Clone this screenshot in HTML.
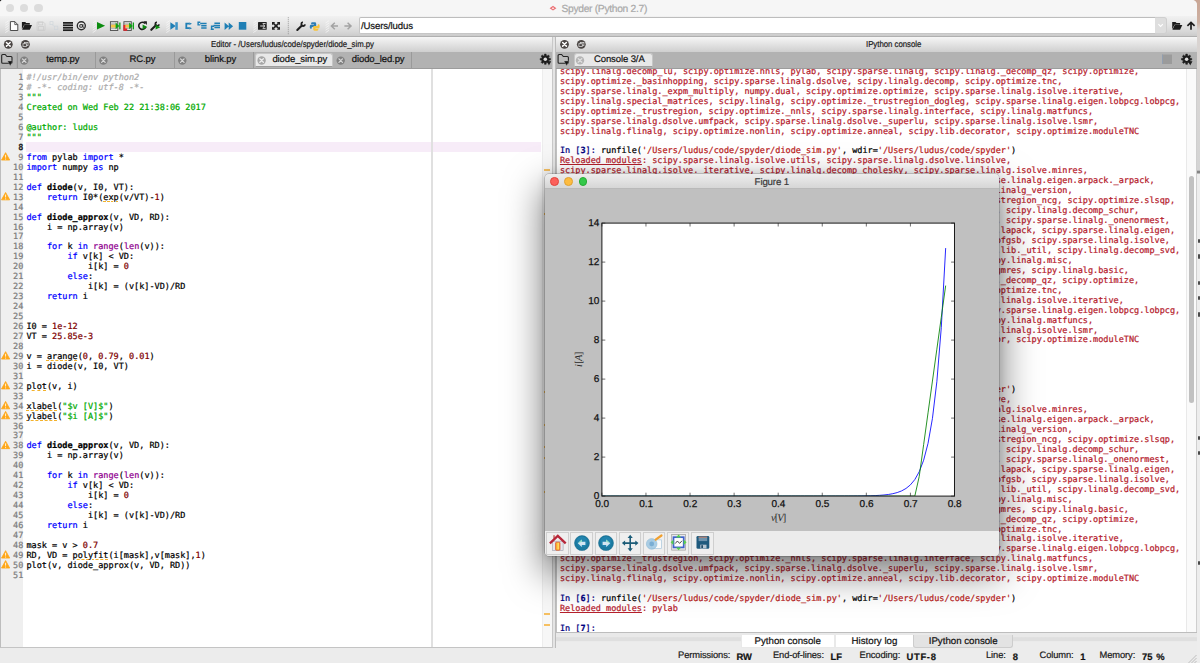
<!DOCTYPE html>
<html lang="en"><head><meta charset="utf-8"><title>Spyder (Python 2.7)</title>
<style>
*{box-sizing:border-box}
html,body{margin:0;padding:0}
body{width:1200px;height:663px;overflow:hidden;position:relative;background:#d9d9d9;font-family:"Liberation Sans",sans-serif;color:#111;-webkit-text-stroke:0.2px;text-rendering:geometricPrecision}
.abs{position:absolute}
#win{position:absolute;left:0;top:0;width:1196.6px;height:663px;background:#ececec;overflow:hidden;border-radius:3px 5px 0 0}
#tlc{position:absolute;left:0;top:0;width:4px;height:4px;background:#000}
.rm{position:absolute;left:1198px;width:2px;height:4.6px;background:#4a4a4a;border-radius:1px}
#tbar{position:absolute;left:0;top:0;width:1197px;height:16px;background:#f6f6f6}
#ttl{position:absolute;left:561.5px;top:2.5px;font-size:10.3px;line-height:13px;color:#a9a9a9;letter-spacing:-0.32px;white-space:nowrap}
.tl{position:absolute;top:3.5px;width:8.6px;height:8.6px;border-radius:50%;background:#dcdcdc}
#tool{position:absolute;left:0;top:15.5px;width:1197px;height:21px;background:linear-gradient(#f1f1f1,#e4e4e4 45%,#d6d6d6 80%,#cbcbcb);border-bottom:1px solid #b0b0b0}
#path{position:absolute;left:358.5px;top:17.2px;width:796.5px;height:16.4px;background:#fff;border:1px solid #c6c6c6;border-top-color:#bdbdbd;border-right:0;border-radius:2px 0 0 2px}
#pathtxt{position:absolute;left:361px;top:21.4px;font-size:9.6px;line-height:12px;letter-spacing:-0.12px;color:#111;white-space:nowrap}
#pathdd{position:absolute;left:1154.6px;top:17.2px;width:12.6px;height:16.4px;background:#dedede;border:1px solid #cfcfcf;border-left:0;border-radius:0 3px 3px 0}
.ptitle span{transform:scaleX(.9);transform-origin:0 50%}
.ptitle{position:absolute;top:36.5px;height:15.5px;background:linear-gradient(#f6f6f6,#e6e6e6 40%,#cfcfcf);font-size:8.7px;line-height:14.8px;text-align:center;color:#1a1a1a;letter-spacing:-0.02px;white-space:nowrap}
.tabbar{position:absolute;top:52px;height:16.8px;background:#b2b2b2;border-bottom:1.3px solid #9c9c9c}
.tab{position:absolute;top:52px;height:16px;font-size:9.5px;line-height:16.4px;color:#111;white-space:nowrap;letter-spacing:-0.1px}
.tab.sep{border-right:1px solid #9a9a9a}
.tab.act{background:#e8e8e8;border-radius:3px 3px 1px 1px;top:52.8px;height:13.9px;line-height:12px;border:1px solid #c6c6c6;border-bottom-color:#9d9d9d}
.tab span{position:absolute;top:0}
#ed{position:absolute;left:0;top:68.8px;width:551.5px;height:579.4px;background:#fff;overflow:hidden;border-left:1px solid #bdbdbd;border-bottom:1px solid #c4c4c4}
#gut{position:absolute;left:0;top:0;width:22.3px;height:580px;background:#efefef}
#curline{position:absolute;left:25.2px;top:73.0px;width:514.8px;height:9.95px;background:#f7ecf8}
#edge{position:absolute;left:430.3px;top:0;width:1.4px;height:580px;background:#e0e0e0}
#flags{position:absolute;left:541px;top:0;width:10px;height:580px;background:#f7f7f7;border-left:1px solid #ededed}
.flag{position:absolute;left:542.8px;width:6px;height:2px;background:#f6c062;margin-top:0.6px}
.mono,.ln,.cl,.co{font-family:"DejaVu Sans Mono","Liberation Mono",monospace;font-size:8.53px;line-height:9.95px;white-space:pre;-webkit-text-stroke:0.22px}
.ln{position:absolute;left:0;width:22.3px;text-align:right;color:#7d7d7d;margin-top:-68.8px}
.ln.cur{color:#222;font-weight:bold}
.cl{position:absolute;left:25.4px;color:#000;margin-top:-68.8px}
.k{color:#0000ff}.b{color:#900090}.d{font-weight:bold}.n{color:#800000}.s{color:#00aa00}.c{color:#adadad;font-style:italic}
.w{text-decoration:underline;text-decoration-style:dashed;text-decoration-color:#f3b22c;text-decoration-thickness:1px;text-underline-offset:1px}
#split{position:absolute;left:551.5px;top:36.5px;width:4.5px;height:611px;background:#e4e4e4;border-left:1px solid #c8c8c8;border-right:1px solid #bcbcbc}
#co{position:absolute;left:556px;top:68.8px;width:641px;height:564.2px;background:#fff;overflow:hidden;border-left:1px solid #c2c2c2;border-bottom:1px solid #bdbdbd}
.co{position:absolute;left:2.9px;color:#b5202c}
.co.blk{color:#000}
.pi{color:#000080}.pi b{font-weight:bold}.ps{color:#ba2121}
#sbtrack{position:absolute;left:629.3px;top:0;width:10.4px;border-right:1px solid #cfcfcf;height:565px;background:#fafafa;border-left:1px solid #e9e9e9}
#sbthumb{position:absolute;left:631.7px;top:107.0px;width:5.8px;height:226.8px;border-radius:3px;background:#c1c1c1}
#btabs{position:absolute;left:556px;top:633px;width:641px;height:15px;background:linear-gradient(#e9e9e9 0,#e9e9e9 4px,#dfdfdf 4.6px,#dfdfdf 8px,#ececec 8.6px)}
.bt{position:absolute;top:634.6px;height:13.6px;font-size:9.7px;line-height:14px;text-align:center;white-space:nowrap;color:#111;background:#fff;border:1px solid #e9e9e9;border-top:0}
.bt.sel{background:#e3e3e3;border-color:#cdcdcd;border-radius:0 0 3px 3px}
#status{position:absolute;left:0;top:648px;width:1197px;height:15px;background:#ececec}
.sl{position:absolute;top:648.7px;font-size:9.35px;line-height:12px;color:#1a1a1a;white-space:nowrap;letter-spacing:-0.1px}
.sv{position:absolute;top:650.6px;font-weight:bold;font-size:9.4px;line-height:12px;color:#111;white-space:pre}
#fig{position:absolute;left:544.7px;top:174.2px;width:454.2px;height:381.6px;background:#c0c0c0;border-radius:4px;box-shadow:0 0 0 0.5px rgba(0,0,0,.28),0 15px 36px 3px rgba(0,0,0,.5),0 0 10px rgba(0,0,0,.12);overflow:hidden}
#figt{position:absolute;left:0;top:0;width:100%;height:15px;background:linear-gradient(#ededed,#d6d6d6);border-bottom:1px solid #b9b9b9;text-align:center;font-size:9.7px;line-height:17.6px;color:#3a3a3a;letter-spacing:-0.15px;overflow:hidden}
.ftl{position:absolute;top:3.2px;width:8.8px;height:8.8px;border-radius:50%}
#figtb{position:absolute;left:0;top:356.6px;width:100%;height:25px;background:#ececec}
.fb{position:absolute;top:358px;width:22.3px;height:22.6px;border:1px solid #cfcfcf;background:#efefef}
svg{position:absolute;left:0;top:0;overflow:visible}
svg text{font-family:"Liberation Sans",sans-serif;text-rendering:geometricPrecision}
#rstrip{position:absolute;left:1190px;top:0;width:10px;height:663px;background:linear-gradient(#c9a695 0,#cdb0a2 22px,#d9d3d0 30px,#d8d6d5 100px,#d4d4d4 170px,#6a6a6a 172px,#ededed 174.5px,#ededed 100%)}
</style></head>
<body>
<div id="tlc"></div><div id="rstrip"></div>
<div class="rm" style="top:238.8px"></div><div class="rm" style="top:254.4px"></div><div class="rm" style="top:280.8px"></div><div class="rm" style="top:295.9px"></div><div class="rm" style="top:312.2px"></div><div class="rm" style="top:435.9px"></div><div class="rm" style="top:450.9px"></div><div class="rm" style="top:560.9px"></div>
<div id="win">
<div id="tbar">
<div class="tl" style="left:5.5px"></div><div class="tl" style="left:19.8px"></div><div class="tl" style="left:34.2px"></div>
<div id="ttl">Spyder (Python 2.7)</div>
</div>
<div id="tool"></div>
<div id="path"></div><div id="pathtxt">/Users/ludus</div><div id="pathdd"></div>
<div class="ptitle" style="left:0;width:551.5px"><span style="position:absolute;left:210.8px">Editor - /Users/ludus/code/spyder/diode_sim.py</span></div>
<div class="ptitle" style="left:556px;width:641px"><span style="position:absolute;left:309.6px">IPython console</span></div>
<div class="tabbar" style="left:0;width:551.5px"></div>
<div class="tabbar" style="left:556px;width:641px"></div>
<div class="tab sep" style="left:17.5px;width:78.5px"><span style="left:28.8px">temp.py</span></div>
<div class="tab sep" style="left:96.0px;width:79.0px"><span style="left:33.5px">RC.py</span></div>
<div class="tab sep" style="left:175.0px;width:79.0px"><span style="left:29.8px">blink.py</span></div>
<div class="tab act" style="left:254.6px;width:78.7px"><span style="left:16.8px">diode_sim.py</span></div>
<div class="tab sep" style="left:333.3px;width:79.2px"><span style="left:18.5px">diodo_led.py</span></div>
<div class="tab act" style="left:573.7px;width:79.6px"><span style="left:19.3px">Console 3/A</span></div>
<div id="ed">
<div id="gut"></div><div id="curline"></div><div id="edge"></div><div id="flags"></div>
<div class="flag" style="top:99.4px"></div>
<div class="flag" style="top:143.8px"></div>
<div class="flag" style="top:321.4px"></div>
<div class="flag" style="top:354.7px"></div>
<div class="flag" style="top:376.9px"></div>
<div class="flag" style="top:388.0px"></div>
<div class="flag" style="top:421.3px"></div>
<div class="flag" style="top:543.4px"></div>
<div class="flag" style="top:554.5px"></div>
<div class="ln" style="top:74.25px">1</div>
<div class="cl" style="top:74.25px"><span class="c">#!/usr/bin/env python2</span></div>
<div class="ln" style="top:84.20px">2</div>
<div class="cl" style="top:84.20px"><span class="c"># -*- coding: utf-8 -*-</span></div>
<div class="ln" style="top:94.15px">3</div>
<div class="cl" style="top:94.15px"><span class="s">"""</span></div>
<div class="ln" style="top:104.10px">4</div>
<div class="cl" style="top:104.10px"><span class="s">Created on Wed Feb 22 21:38:06 2017</span></div>
<div class="ln" style="top:114.05px">5</div>
<div class="ln" style="top:124.00px">6</div>
<div class="cl" style="top:124.00px"><span class="s">@author: ludus</span></div>
<div class="ln" style="top:133.95px">7</div>
<div class="cl" style="top:133.95px"><span class="s">"""</span></div>
<div class="ln cur" style="top:143.90px">8</div>
<div class="ln" style="top:153.85px">9</div>
<div class="cl" style="top:153.85px"><span class="k">from</span> pylab <span class="k">import</span> *</div>
<div class="ln" style="top:163.80px">10</div>
<div class="cl" style="top:163.80px"><span class="k">import</span> numpy <span class="k">as</span> np</div>
<div class="ln" style="top:173.75px">11</div>
<div class="ln" style="top:183.70px">12</div>
<div class="cl" style="top:183.70px"><span class="k">def</span> <span class="d">diode</span>(v, I0, VT):</div>
<div class="ln" style="top:193.65px">13</div>
<div class="cl" style="top:193.65px">    <span class="k">return</span> I0*(<span class="w">exp</span>(v/VT)-<span class="n">1</span>)</div>
<div class="ln" style="top:203.60px">14</div>
<div class="ln" style="top:213.55px">15</div>
<div class="cl" style="top:213.55px"><span class="k">def</span> <span class="d">diode_approx</span>(v, VD, RD):</div>
<div class="ln" style="top:223.50px">16</div>
<div class="cl" style="top:223.50px">    i = np.array(v)</div>
<div class="ln" style="top:233.45px">17</div>
<div class="ln" style="top:243.40px">18</div>
<div class="cl" style="top:243.40px">    <span class="k">for</span> k <span class="k">in</span> <span class="b">range</span>(<span class="b">len</span>(v)):</div>
<div class="ln" style="top:253.35px">19</div>
<div class="cl" style="top:253.35px">        <span class="k">if</span> v[k] &lt; VD:</div>
<div class="ln" style="top:263.30px">20</div>
<div class="cl" style="top:263.30px">            i[k] = <span class="n">0</span></div>
<div class="ln" style="top:273.25px">21</div>
<div class="cl" style="top:273.25px">        <span class="k">else</span>:</div>
<div class="ln" style="top:283.20px">22</div>
<div class="cl" style="top:283.20px">            i[k] = (v[k]-VD)/RD</div>
<div class="ln" style="top:293.15px">23</div>
<div class="cl" style="top:293.15px">    <span class="k">return</span> i</div>
<div class="ln" style="top:303.10px">24</div>
<div class="ln" style="top:313.05px">25</div>
<div class="ln" style="top:323.00px">26</div>
<div class="cl" style="top:323.00px">I0 = <span class="n">1e-12</span></div>
<div class="ln" style="top:332.95px">27</div>
<div class="cl" style="top:332.95px">VT = <span class="n">25.85e-3</span></div>
<div class="ln" style="top:342.90px">28</div>
<div class="ln" style="top:352.85px">29</div>
<div class="cl" style="top:352.85px">v = <span class="w">arange</span>(<span class="n">0</span>, <span class="n">0.79</span>, <span class="n">0.01</span>)</div>
<div class="ln" style="top:362.80px">30</div>
<div class="cl" style="top:362.80px">i = diode(v, I0, VT)</div>
<div class="ln" style="top:372.75px">31</div>
<div class="ln" style="top:382.70px">32</div>
<div class="cl" style="top:382.70px"><span class="w">plot</span>(v, i)</div>
<div class="ln" style="top:392.65px">33</div>
<div class="ln" style="top:402.60px">34</div>
<div class="cl" style="top:402.60px"><span class="w">xlabel</span>(<span class="s">"$v [V]$"</span>)</div>
<div class="ln" style="top:412.55px">35</div>
<div class="cl" style="top:412.55px"><span class="w">ylabel</span>(<span class="s">"$i [A]$"</span>)</div>
<div class="ln" style="top:422.50px">36</div>
<div class="ln" style="top:432.45px">37</div>
<div class="ln" style="top:442.40px">38</div>
<div class="cl" style="top:442.40px"><span class="k">def</span> <span class="d">diode_approx</span>(v, VD, RD):</div>
<div class="ln" style="top:452.35px">39</div>
<div class="cl" style="top:452.35px">    i = np.array(v)</div>
<div class="ln" style="top:462.30px">40</div>
<div class="ln" style="top:472.25px">41</div>
<div class="cl" style="top:472.25px">    <span class="k">for</span> k <span class="k">in</span> <span class="b">range</span>(<span class="b">len</span>(v)):</div>
<div class="ln" style="top:482.20px">42</div>
<div class="cl" style="top:482.20px">        <span class="k">if</span> v[k] &lt; VD:</div>
<div class="ln" style="top:492.15px">43</div>
<div class="cl" style="top:492.15px">            i[k] = <span class="n">0</span></div>
<div class="ln" style="top:502.10px">44</div>
<div class="cl" style="top:502.10px">        <span class="k">else</span>:</div>
<div class="ln" style="top:512.05px">45</div>
<div class="cl" style="top:512.05px">            i[k] = (v[k]-VD)/RD</div>
<div class="ln" style="top:522.00px">46</div>
<div class="cl" style="top:522.00px">    <span class="k">return</span> i</div>
<div class="ln" style="top:531.95px">47</div>
<div class="ln" style="top:541.90px">48</div>
<div class="cl" style="top:541.90px">mask = v &gt; <span class="n">0.7</span></div>
<div class="ln" style="top:551.85px">49</div>
<div class="cl" style="top:551.85px">RD, VD = <span class="w">polyfit</span>(i[mask],v[mask],<span class="n">1</span>)</div>
<div class="ln" style="top:561.80px">50</div>
<div class="cl" style="top:561.80px">plot(v, diode_approx(v, VD, RD))</div>
<div class="ln" style="top:571.75px">51</div>
</div>
<div id="split"></div>
<div id="co">
<div class="co" style="top:-0.95px">scipy.linalg.decomp_lu, scipy.optimize.nnls, pylab, scipy.sparse.linalg, scipy.linalg._decomp_qz, scipy.optimize,</div>
<div class="co" style="top:9.00px">scipy.optimize._basinhopping, scipy.sparse.linalg.dsolve, scipy.linalg.decomp, scipy.optimize.tnc,</div>
<div class="co" style="top:18.95px">scipy.sparse.linalg._expm_multiply, numpy.dual, scipy.optimize.optimize, scipy.sparse.linalg.isolve.iterative,</div>
<div class="co" style="top:28.90px">scipy.linalg.special_matrices, scipy.linalg, scipy.optimize._trustregion_dogleg, scipy.sparse.linalg.eigen.lobpcg.lobpcg,</div>
<div class="co" style="top:38.85px">scipy.optimize._trustregion, scipy.optimize._nnls, scipy.sparse.linalg.interface, scipy.linalg.matfuncs,</div>
<div class="co" style="top:48.80px">scipy.sparse.linalg.dsolve.umfpack, scipy.sparse.linalg.dsolve._superlu, scipy.sparse.linalg.isolve.lsmr,</div>
<div class="co" style="top:58.75px">scipy.linalg.flinalg, scipy.optimize.nonlin, scipy.optimize.anneal, scipy.lib.decorator, scipy.optimize.moduleTNC</div>
<div class="co blk" style="top:78.65px"><span class="pi">In [<b>3</b>]: </span>runfile(<span class="ps">'/Users/ludus/code/spyder/diode_sim.py'</span>, wdir=<span class="ps">'/Users/ludus/code/spyder'</span>)</div>
<div class="co" style="top:88.60px"><u>Reloaded modules</u>: scipy.sparse.linalg.isolve.utils, scipy.sparse.linalg.dsolve.linsolve,</div>
<div class="co" style="top:98.55px">scipy.sparse.linalg.isolve._iterative, scipy.linalg.decomp_cholesky, scipy.sparse.linalg.isolve.minres,</div>
<div class="co" style="top:108.50px">scipy.sparse.linalg.eigen.arpack, scipy.sparse.linalg.eigen.arpack.arpack, scipy.sparse.linalg.eigen.arpack._arpack,</div>
<div class="co" style="top:118.45px">scipy.sparse.linalg.isolve.lsqr, scipy.optimize._differentialevolution, scipy.linalg.linalg_version,</div>
<div class="co" style="top:128.40px">scipy.optimize._minpack, scipy.sparse.linalg.dsolve._add_newdocs, scipy.optimize._trustregion_ncg, scipy.optimize.slsqp,</div>
<div class="co" style="top:138.35px">scipy.optimize._zeros, scipy.sparse.linalg.matfuncs, scipy.sparse.linalg.eigen.lobpcg, scipy.linalg.decomp_schur,</div>
<div class="co" style="top:148.30px">scipy.linalg.blas, scipy.linalg._fblas, scipy.optimize.zeros, scipy.optimize.minpack2, scipy.sparse.linalg._onenormest,</div>
<div class="co" style="top:158.25px">scipy.optimize.cobyla, scipy.optimize._cobyla, scipy.optimize._minimize, scipy.linalg.lapack, scipy.sparse.linalg.eigen,</div>
<div class="co" style="top:168.20px">scipy.optimize.minpack, scipy.optimize._root, scipy.optimize._slsqp, scipy.optimize.lbfgsb, scipy.sparse.linalg.isolve,</div>
<div class="co" style="top:178.15px">scipy.optimize.linesearch, scipy.linalg._solvers, scipy.linalg._matfuncs_sqrtm, scipy.lib._util, scipy.linalg.decomp_svd,</div>
<div class="co" style="top:188.10px">scipy.linalg._decomp_polar, scipy.linalg._expm_frechet, scipy.optimize._tstutils, scipy.linalg.misc,</div>
<div class="co" style="top:198.05px">scipy.optimize._zeros, scipy.sparse.linalg.eigen.arpack, scipy.sparse.linalg.isolve.lgmres, scipy.linalg.basic,</div>
<div class="co" style="top:208.00px">scipy.linalg.decomp_lu, scipy.optimize.nnls, pylab, scipy.sparse.linalg, scipy.linalg._decomp_qz, scipy.optimize,</div>
<div class="co" style="top:217.95px">scipy.optimize._basinhopping, scipy.sparse.linalg.dsolve, scipy.linalg.decomp, scipy.optimize.tnc,</div>
<div class="co" style="top:227.90px">scipy.sparse.linalg._expm_multiply, numpy.dual, scipy.optimize.optimize, scipy.sparse.linalg.isolve.iterative,</div>
<div class="co" style="top:237.85px">scipy.linalg.special_matrices, scipy.linalg, scipy.optimize._trustregion_dogleg, scipy.sparse.linalg.eigen.lobpcg.lobpcg,</div>
<div class="co" style="top:247.80px">scipy.optimize._trustregion, scipy.optimize._nnls, scipy.sparse.linalg.interface, scipy.linalg.matfuncs,</div>
<div class="co" style="top:257.75px">scipy.sparse.linalg.dsolve.umfpack, scipy.sparse.linalg.dsolve._superlu, scipy.sparse.linalg.isolve.lsmr,</div>
<div class="co" style="top:267.70px">scipy.linalg.flinalg, scipy.optimize.nonlin, scipy.optimize.anneal, scipy.lib.decorator, scipy.optimize.moduleTNC</div>
<div class="co blk" style="top:287.60px"><span class="pi">In [<b>4</b>]: </span>close(<span class="ps">'all'</span>)</div>
<div class="co blk" style="top:317.45px"><span class="pi">In [<b>5</b>]: </span>runfile(<span class="ps">'/Users/ludus/code/spyder/diode_sim.py'</span>, wdir=<span class="ps">'/Users/ludus/code/spyder'</span>)</div>
<div class="co" style="top:327.40px"><u>Reloaded modules</u>: scipy.sparse.linalg.isolve.utils, scipy.sparse.linalg.dsolve.linsolve,</div>
<div class="co" style="top:337.35px">scipy.sparse.linalg.isolve._iterative, scipy.linalg.decomp_cholesky, scipy.sparse.linalg.isolve.minres,</div>
<div class="co" style="top:347.30px">scipy.sparse.linalg.eigen.arpack, scipy.sparse.linalg.eigen.arpack.arpack, scipy.sparse.linalg.eigen.arpack._arpack,</div>
<div class="co" style="top:357.25px">scipy.sparse.linalg.isolve.lsqr, scipy.optimize._differentialevolution, scipy.linalg.linalg_version,</div>
<div class="co" style="top:367.20px">scipy.optimize._minpack, scipy.sparse.linalg.dsolve._add_newdocs, scipy.optimize._trustregion_ncg, scipy.optimize.slsqp,</div>
<div class="co" style="top:377.15px">scipy.optimize._zeros, scipy.sparse.linalg.matfuncs, scipy.sparse.linalg.eigen.lobpcg, scipy.linalg.decomp_schur,</div>
<div class="co" style="top:387.10px">scipy.linalg.blas, scipy.linalg._fblas, scipy.optimize.zeros, scipy.optimize.minpack2, scipy.sparse.linalg._onenormest,</div>
<div class="co" style="top:397.05px">scipy.optimize.cobyla, scipy.optimize._cobyla, scipy.optimize._minimize, scipy.linalg.lapack, scipy.sparse.linalg.eigen,</div>
<div class="co" style="top:407.00px">scipy.optimize.minpack, scipy.optimize._root, scipy.optimize._slsqp, scipy.optimize.lbfgsb, scipy.sparse.linalg.isolve,</div>
<div class="co" style="top:416.95px">scipy.optimize.linesearch, scipy.linalg._solvers, scipy.linalg._matfuncs_sqrtm, scipy.lib._util, scipy.linalg.decomp_svd,</div>
<div class="co" style="top:426.90px">scipy.linalg._decomp_polar, scipy.linalg._expm_frechet, scipy.optimize._tstutils, scipy.linalg.misc,</div>
<div class="co" style="top:436.85px">scipy.optimize._zeros, scipy.sparse.linalg.eigen.arpack, scipy.sparse.linalg.isolve.lgmres, scipy.linalg.basic,</div>
<div class="co" style="top:446.80px">scipy.linalg.decomp_lu, scipy.optimize.nnls, pylab, scipy.sparse.linalg, scipy.linalg._decomp_qz, scipy.optimize,</div>
<div class="co" style="top:456.75px">scipy.optimize._basinhopping, scipy.sparse.linalg.dsolve, scipy.linalg.decomp, scipy.optimize.tnc,</div>
<div class="co" style="top:466.70px">scipy.sparse.linalg._expm_multiply, numpy.dual, scipy.optimize.optimize, scipy.sparse.linalg.isolve.iterative,</div>
<div class="co" style="top:476.65px">scipy.linalg.special_matrices, scipy.linalg, scipy.optimize._trustregion_dogleg, scipy.sparse.linalg.eigen.lobpcg.lobpcg,</div>
<div class="co" style="top:486.60px">scipy.optimize._trustregion, scipy.optimize._nnls, scipy.sparse.linalg.interface, scipy.linalg.matfuncs,</div>
<div class="co" style="top:496.55px">scipy.sparse.linalg.dsolve.umfpack, scipy.sparse.linalg.dsolve._superlu, scipy.sparse.linalg.isolve.lsmr,</div>
<div class="co" style="top:506.50px">scipy.linalg.flinalg, scipy.optimize.nonlin, scipy.optimize.anneal, scipy.lib.decorator, scipy.optimize.moduleTNC</div>
<div class="co blk" style="top:526.40px"><span class="pi">In [<b>6</b>]: </span>runfile(<span class="ps">'/Users/ludus/code/spyder/diode_sim.py'</span>, wdir=<span class="ps">'/Users/ludus/code/spyder'</span>)</div>
<div class="co" style="top:536.35px"><u>Reloaded modules</u>: pylab</div>
<div class="co blk" style="top:556.25px"><span class="pi">In [<b>7</b>]: </span></div>
<div id="sbtrack"></div><div id="sbthumb"></div>
</div>
<div id="btabs"></div>
<div class="bt" style="left:740.8px;width:93.8px">Python console</div>
<div class="bt" style="left:835.3px;width:78.3px">History log</div>
<div class="bt sel" style="left:913.3px;width:99.8px">IPython console</div>
<div id="status"></div>
<div class="sl" style="left:678.0px">Permissions:</div>
<div class="sv" style="left:736.5px">RW</div>
<div class="sl" style="left:773.0px;letter-spacing:-0.12px">End-of-lines:</div>
<div class="sv" style="left:830.5px">LF</div>
<div class="sl" style="left:859.5px">Encoding:</div>
<div class="sv" style="left:906.5px;letter-spacing:0.7px">UTF-8</div>
<div class="sl" style="left:986.0px">Line:</div>
<div class="sv" style="left:1012.8px">8</div>
<div class="sl" style="left:1039.5px">Column:</div>
<div class="sv" style="left:1080.2px">1</div>
<div class="sl" style="left:1099.5px">Memory:</div>
<div class="sv" style="left:1142.0px;word-spacing:1.2px">75 %</div>
<svg width="1200" height="663" viewBox="0 0 1200 663"><path d="M5.3,23.0l3.4,-2.3M5.3,25.4l3.4,-2.3M5.3,27.8l3.4,-2.3M5.3,30.2l3.4,-2.3M5.3,32.6l3.4,-2.3" stroke="#fbfbfb" stroke-width="1" fill="none" opacity=".65"/>
<path d="M92.7,23.0l3.4,-2.3M92.7,25.4l3.4,-2.3M92.7,27.8l3.4,-2.3M92.7,30.2l3.4,-2.3M92.7,32.6l3.4,-2.3" stroke="#fbfbfb" stroke-width="1" fill="none" opacity=".65"/>
<path d="M166.3,23.0l3.4,-2.3M166.3,25.4l3.4,-2.3M166.3,27.8l3.4,-2.3M166.3,30.2l3.4,-2.3M166.3,32.6l3.4,-2.3" stroke="#fbfbfb" stroke-width="1" fill="none" opacity=".65"/>
<path d="M253.3,23.0l3.4,-2.3M253.3,25.4l3.4,-2.3M253.3,27.8l3.4,-2.3M253.3,30.2l3.4,-2.3M253.3,32.6l3.4,-2.3" stroke="#fbfbfb" stroke-width="1" fill="none" opacity=".65"/>
<path d="M325.6,23.0l3.4,-2.3M325.6,25.4l3.4,-2.3M325.6,27.8l3.4,-2.3M325.6,30.2l3.4,-2.3M325.6,32.6l3.4,-2.3" stroke="#fbfbfb" stroke-width="1" fill="none" opacity=".65"/>
<path d="M10.4,21.6h4.4l3,3v5.9h-7.4z" fill="#fdfdfd" stroke="#3a3a3a" stroke-width="0.9" stroke-linejoin="round"/><path d="M14.8,21.6v3h3" fill="none" stroke="#3a3a3a" stroke-width="0.8"/>
<path d="M21.90,22.00h3.3l1,1.1h3.6v1.6h-5.6l-2.3,4.6z" fill="#1c1c1c"/><path d="M24.40,25.10h7.6l-2.2,4.7h-7.7z" fill="#1c1c1c"/>
<g fill="none" stroke="#cdcdcd" stroke-width="0.8"><path d="M37.1,22.1h6.3l1.6,1.6v6.6h-7.9z"/><rect x="38.7" y="22.1" width="4" height="2.8"/><rect x="38.4" y="26.6" width="5.2" height="3.7"/></g>
<g fill="none" stroke="#cfd6dc" stroke-width="0.8" opacity=".8"><rect x="50" y="21.6" width="3" height="3"/><rect x="54.4" y="26.2" width="3.4" height="3.4"/><path d="M52,24.5l3,2.5"/></g>
<rect x="63" y="22.0" width="10" height="1.75" fill="#1e1e1e"/><rect x="63" y="24.4" width="10" height="1.75" fill="#1e1e1e"/><rect x="63" y="26.9" width="10" height="1.75" fill="#1e1e1e"/><rect x="63" y="29.3" width="10" height="1.75" fill="#1e1e1e"/>
<circle cx="81.3" cy="25.8" r="4" fill="#efefef" stroke="#2a2a2a" stroke-width="1.4"/><circle cx="81.1" cy="25.9" r="1.4" fill="none" stroke="#2a2a2a" stroke-width="1.1"/><path d="M82.9,24.2v2.4q0,1 1.1,0.7" fill="none" stroke="#2a2a2a" stroke-width="1"/>
<path d="M97,21.9l8.1,3.8l-8.1,3.8z" fill="#0c8c10"/>
<rect x="110.40" y="21.7" width="7.4" height="8.8" fill="#e6e6e6" stroke="#4a4a4a" stroke-width="0.9"/><path d="M110.40,24.1h7.4M110.40,28.1h7.4" stroke="#777" stroke-width="0.7"/><rect x="111.10" y="24.7" width="6" height="2.8" fill="#f6c544"/><path d="M115.60,22.5l3.7,3.4l-3.7,3.4z" fill="#10a015"/><rect x="119.20" y="22.5" width="1.3" height="6.8" fill="#10a015"/>
<rect x="123.90" y="21.7" width="7.4" height="8.8" fill="#e6e6e6" stroke="#4a4a4a" stroke-width="0.9"/><path d="M123.90,24.1h7.4M123.90,28.1h7.4" stroke="#777" stroke-width="0.7"/><rect x="124.60" y="24.7" width="6" height="2.8" fill="#f6c544"/><path d="M129.10,22.5l3.7,3.4l-3.7,3.4z" fill="#10a015"/><rect x="132.70" y="22.5" width="1.3" height="6.8" fill="#10a015"/>
<path d="M123.4,24.9h1.9v3.6h1.9v2.2h-3.8z" fill="#e8232a"/>
<path d="M145.2,23.6a3.6,3.6 0 1 0 0.6,3.2" fill="none" stroke="#1c1c1c" stroke-width="1.6"/><path d="M143.3,21.3h3.6v3.6z" fill="#1c1c1c"/>
<path d="M142.6,24.6l4.6,2.5l-4.6,2.5z" fill="#0c8c10"/>
<path d="M151.30,29.80L155.90,25.30" stroke="#1f1f1f" stroke-width="2.1" stroke-linecap="round"/><path d="M156.87,22.13A1.90,1.90 0 1 0 159.07,24.33" fill="none" stroke="#1f1f1f" stroke-width="1.8"/>
<path d="M155.6,24.8l4.7,2.4l-4.7,2.4z" fill="#0c8c10"/>
<path d="M170.4,22.2l5.3,3.8l-5.3,3.8z" fill="#1f7fb5"/><rect x="175.3" y="22.2" width="2.5" height="7.6" fill="#3d93c6"/>
<path d="M189.6,23.6h-3.3v4.6h3.3" fill="none" stroke="#1f7fb5" stroke-width="1.8"/><path d="M189.4,22.4l2.6,1.3l-2.6,1.3zM189.4,26.9l2.6,1.3l-2.6,1.3z" fill="#1f7fb5"/>
<path d="M200.3,22.3h-2.2v2.6h2.2" fill="none" stroke="#1f7fb5" stroke-width="1.4"/><path d="M200.2,23.6h6.4M201.2,25.8h5.4M201.2,28.0h5.4" stroke="#1f7fb5" stroke-width="1.5"/>
<path d="M214.2,26.3h-2.6v3h2.2" fill="none" stroke="#1f7fb5" stroke-width="1.5"/><path d="M211.6,28l-1,1.8h2z" fill="#1f7fb5"/><path d="M214.4,23.2h5.6M213.6,25.4h6.4M214.4,27.6h5.6" stroke="#1f7fb5" stroke-width="1.5"/>
<path d="M224.6,22.4l4.4,3.8l-4.4,3.8zM228.7,22.4l4.4,3.8l-4.4,3.8z" fill="#1f7fb5"/>
<rect x="238.8" y="22" width="7.5" height="7.7" fill="#1f7fb5"/>
<rect x="258" y="22" width="8.7" height="7.8" rx="0.6" fill="#222"/><path d="M262.6,23.6h3M260.2,26h4.6M263.2,24.6l1.6,1.4l-1.6,1.4M262.6,28.3h3" stroke="#ededed" stroke-width="0.9" fill="none"/>
<path d="M273.4,23.4l5.2,5M278.6,23.4l-5.2,5" stroke="#1e1e1e" stroke-width="1.5"/><path d="M272,22h3.2l-3.2,3.2zM280,22v3.2l-3.2,-3.2zM272,29.8v-3.2l3.2,3.2zM280,29.8h-3.2l3.2,-3.2z" fill="#1e1e1e"/>
<path d="M288.3,17.3v17.6" stroke="#8a8a8a" stroke-width="0.9" stroke-dasharray="0.9,1.1"/>
<path d="M297.30,29.90L301.90,25.40" stroke="#1f1f1f" stroke-width="2.1" stroke-linecap="round"/><path d="M302.87,22.23A1.90,1.90 0 1 0 305.07,24.43" fill="none" stroke="#1f1f1f" stroke-width="1.8"/>
<path d="M312.2,22.3h2.6a1.4,1.4 0 0 1 1.4,1.4v2.2a1,1 0 0 1 -1,1h-2.4a1.2,1.2 0 0 0 -1.2,1.2v0.6h-0.6a1.2,1.2 0 0 1 -1.2,-1.2v-1.4a1.6,1.6 0 0 1 1.6,-1.6h2.6v-0.5h-2.9v-0.6a1.1,1.1 0 0 1 1.1,-1.1z" fill="#2e7db4"/>
<path d="M317.2,30.7h-2.6a1.4,1.4 0 0 1 -1.4,-1.4v-2.2a1,1 0 0 1 1,-1h2.4a1.2,1.2 0 0 0 1.2,-1.2v-0.6h0.6a1.2,1.2 0 0 1 1.2,1.2v1.4a1.6,1.6 0 0 1 -1.6,1.6h-2.6v0.5h2.9v0.6a1.1,1.1 0 0 1 -1.1,1.1z" fill="#f7c33c"/>
<path d="M331.4,26h6.6M334.8,22.8l-3.4,3.2l3.4,3.2" fill="none" stroke="#a3a3a3" stroke-width="1.5"/>
<path d="M344.4,26h6.6M347.6,22.8l3.4,3.2l-3.4,3.2" fill="none" stroke="#a3a3a3" stroke-width="1.5"/>
<path d="M1158.4,24.2l2.2,2.2l2.2,-2.2" fill="none" stroke="#fff" stroke-width="1.1"/>
<path d="M1172.20,22.00h3.3l1,1.1h3.6v1.6h-5.6l-2.3,4.6z" fill="#1c1c1c"/><path d="M1174.70,25.10h7.6l-2.2,4.7h-7.7z" fill="#1c1c1c"/>
<path d="M1191,29.8v-6.6M1187.4,25.9l3.6,-3.5l3.6,3.5" fill="none" stroke="#1c1c1c" stroke-width="1.7"/>
<circle cx="8.30" cy="44.30" r="4.40" fill="#4b4644"/><path d="M6.45,42.45l3.70,3.70M10.15,42.45l-3.70,3.70" stroke="#fff" stroke-width="1.50" stroke-linecap="round"/>
<circle cx="564.50" cy="44.30" r="4.40" fill="#4b4644"/><path d="M562.65,42.45l3.70,3.70M566.35,42.45l-3.70,3.70" stroke="#fff" stroke-width="1.50" stroke-linecap="round"/>
<circle cx="25.40" cy="44.3" r="4.4" fill="#4b4644"/><rect x="24.40" y="42.4" width="3.6" height="3" fill="none" stroke="#d8d8d8" stroke-width="0.8"/><rect x="23.00" y="43.7" width="3.4" height="2.8" fill="#4b4644" stroke="#d8d8d8" stroke-width="0.8"/>
<circle cx="581.30" cy="44.3" r="4.4" fill="#4b4644"/><rect x="580.30" y="42.4" width="3.6" height="3" fill="none" stroke="#d8d8d8" stroke-width="0.8"/><rect x="578.90" y="43.7" width="3.4" height="2.8" fill="#4b4644" stroke="#d8d8d8" stroke-width="0.8"/>
<path d="M2.70,54.50h2.5l1.7,2h4.1a1,1 0 0 1 1,1v4.7a1,1 0 0 1 -1,1h-8.3a1,1 0 0 1 -1,-1v-6.7a1,1 0 0 1 1,-1z" fill="#bbb" stroke="#232323" stroke-width="1.1" stroke-linejoin="round"/><path d="M7.60,61.00h5.2l-2.6,4.7z" fill="#151515" stroke="#b2b2b2" stroke-width="0.35"/>
<path d="M559.10,54.50h2.5l1.7,2h4.1a1,1 0 0 1 1,1v4.7a1,1 0 0 1 -1,1h-8.3a1,1 0 0 1 -1,-1v-6.7a1,1 0 0 1 1,-1z" fill="#bbb" stroke="#232323" stroke-width="1.1" stroke-linejoin="round"/><path d="M564.00,61.00h5.2l-2.6,4.7z" fill="#151515" stroke="#b2b2b2" stroke-width="0.35"/>
<path d="M17.3,53v15" stroke="#8c8c8c" stroke-width="0.9"/>
<circle cx="24.20" cy="60.60" r="4.20" fill="#808080"/><path d="M22.44,58.84l3.53,3.53M25.96,58.84l-3.53,3.53" stroke="#d6d6d6" stroke-width="1.30" stroke-linecap="round"/>
<circle cx="103.40" cy="60.60" r="4.20" fill="#808080"/><path d="M101.64,58.84l3.53,3.53M105.16,58.84l-3.53,3.53" stroke="#d6d6d6" stroke-width="1.30" stroke-linecap="round"/>
<circle cx="182.30" cy="60.60" r="4.20" fill="#808080"/><path d="M180.54,58.84l3.53,3.53M184.06,58.84l-3.53,3.53" stroke="#d6d6d6" stroke-width="1.30" stroke-linecap="round"/>
<circle cx="340.70" cy="60.60" r="4.20" fill="#808080"/><path d="M338.94,58.84l3.53,3.53M342.46,58.84l-3.53,3.53" stroke="#d6d6d6" stroke-width="1.30" stroke-linecap="round"/>
<circle cx="261.60" cy="60.50" r="4.20" fill="#a6a6a6"/><path d="M259.84,58.74l3.53,3.53M263.36,58.74l-3.53,3.53" stroke="#ececec" stroke-width="1.30" stroke-linecap="round"/>
<circle cx="580.00" cy="60.40" r="4.20" fill="#b5b5b5"/><path d="M578.24,58.64l3.53,3.53M581.76,58.64l-3.53,3.53" stroke="#e2e2e2" stroke-width="1.30" stroke-linecap="round"/>
<polygon points="548.92,58.23 550.44,58.39 550.44,60.01 548.92,60.17 548.54,61.07 549.51,62.26 548.36,63.41 547.17,62.44 546.27,62.82 546.11,64.34 544.49,64.34 544.33,62.82 543.43,62.44 542.24,63.41 541.09,62.26 542.06,61.07 541.68,60.17 540.16,60.01 540.16,58.39 541.68,58.23 542.06,57.33 541.09,56.14 542.24,54.99 543.43,55.96 544.33,55.58 544.49,54.06 546.11,54.06 546.27,55.58 547.17,55.96 548.36,54.99 549.51,56.14 548.54,57.33" fill="#1d1d1d" stroke="#1d1d1d" stroke-width="0.5" stroke-linejoin="round"/><circle cx="545.30" cy="59.20" r="1.75" fill="#dcdcdc"/><path d="M547.20,61.20h4l-2.3,4.2z" fill="#1d1d1d"/>
<polygon points="1190.22,58.23 1191.74,58.39 1191.74,60.01 1190.22,60.17 1189.84,61.07 1190.81,62.26 1189.66,63.41 1188.47,62.44 1187.57,62.82 1187.41,64.34 1185.79,64.34 1185.63,62.82 1184.73,62.44 1183.54,63.41 1182.39,62.26 1183.36,61.07 1182.98,60.17 1181.46,60.01 1181.46,58.39 1182.98,58.23 1183.36,57.33 1182.39,56.14 1183.54,54.99 1184.73,55.96 1185.63,55.58 1185.79,54.06 1187.41,54.06 1187.57,55.58 1188.47,55.96 1189.66,54.99 1190.81,56.14 1189.84,57.33" fill="#1d1d1d" stroke="#1d1d1d" stroke-width="0.5" stroke-linejoin="round"/><circle cx="1186.60" cy="59.20" r="1.75" fill="#dcdcdc"/><path d="M1188.50,61.20h4l-2.3,4.2z" fill="#1d1d1d"/>
<rect x="1162" y="54.5" width="10" height="9.5" fill="#9b9b9b"/><rect x="1162" y="54.5" width="0.7" height="9.5" fill="#8da0b8"/>
<path d="M5.6,152.67l4.1,7.4h-8.2z" fill="#ffa718" stroke="#ffa718" stroke-width="0.8" stroke-linejoin="round"/><path d="M5.6,154.77v2.9M5.6,158.57v1" stroke="#fff3dc" stroke-width="1"/>
<path d="M5.6,192.47l4.1,7.4h-8.2z" fill="#ffa718" stroke="#ffa718" stroke-width="0.8" stroke-linejoin="round"/><path d="M5.6,194.57v2.9M5.6,198.38v1" stroke="#fff3dc" stroke-width="1"/>
<path d="M5.6,351.67l4.1,7.4h-8.2z" fill="#ffa718" stroke="#ffa718" stroke-width="0.8" stroke-linejoin="round"/><path d="M5.6,353.77v2.9M5.6,357.57v1" stroke="#fff3dc" stroke-width="1"/>
<path d="M5.6,381.52l4.1,7.4h-8.2z" fill="#ffa718" stroke="#ffa718" stroke-width="0.8" stroke-linejoin="round"/><path d="M5.6,383.62v2.9M5.6,387.42v1" stroke="#fff3dc" stroke-width="1"/>
<path d="M5.6,401.42l4.1,7.4h-8.2z" fill="#ffa718" stroke="#ffa718" stroke-width="0.8" stroke-linejoin="round"/><path d="M5.6,403.52v2.9M5.6,407.32v1" stroke="#fff3dc" stroke-width="1"/>
<path d="M5.6,411.38l4.1,7.4h-8.2z" fill="#ffa718" stroke="#ffa718" stroke-width="0.8" stroke-linejoin="round"/><path d="M5.6,413.48v2.9M5.6,417.27v1" stroke="#fff3dc" stroke-width="1"/>
<path d="M5.6,441.23l4.1,7.4h-8.2z" fill="#ffa718" stroke="#ffa718" stroke-width="0.8" stroke-linejoin="round"/><path d="M5.6,443.33v2.9M5.6,447.12v1" stroke="#fff3dc" stroke-width="1"/>
<path d="M5.6,550.67l4.1,7.4h-8.2z" fill="#ffa718" stroke="#ffa718" stroke-width="0.8" stroke-linejoin="round"/><path d="M5.6,552.77v2.9M5.6,556.57v1" stroke="#fff3dc" stroke-width="1"/>
<path d="M5.6,560.62l4.1,7.4h-8.2z" fill="#ffa718" stroke="#ffa718" stroke-width="0.8" stroke-linejoin="round"/><path d="M5.6,562.73v2.9M5.6,566.52v1" stroke="#fff3dc" stroke-width="1"/>
<path d="M549.6,8.2l3.4,-2.4l3.4,2.4l-3.4,2.4z" fill="#e9565a" opacity=".85"/><path d="M551.6,8.2l1.4,-1l1.4,1l-1.4,1z" fill="#fbe9e9"/>
<path d="M1188.5,663l8,-8M1191.5,663l5,-5M1194.5,663l2,-2" stroke="#b9b9b9" stroke-width="0.9"/></svg>
</div>
<div id="fig">
<div id="figt">Figure 1</div>
<div class="ftl" style="left:5.4px;background:#fc605b;border:0.5px solid #e0443e"></div>
<div class="ftl" style="left:19.6px;background:#fdbc40;border:0.5px solid #dea033"></div>
<div class="ftl" style="left:33.9px;background:#34c84a;border:0.5px solid #27aa35"></div>
<div id="figtb"></div>
<div class="fb" style="left:1.6px"></div>
<div class="fb" style="left:25.8px"></div>
<div class="fb" style="left:49.9px"></div>
<div class="fb" style="left:74.1px"></div>
<div class="fb" style="left:98.2px"></div>
<div class="fb" style="left:122.4px"></div>
<div class="fb" style="left:146.6px"></div>
<svg width="454.2" height="381.6" viewBox="0 0 454.2 381.6">
<rect x="56.90" y="49.10" width="352.60" height="273.00" fill="#fff"/>
<clipPath id="axc"><rect x="56.90" y="49.10" width="352.60" height="273.00"/></clipPath>
<g clip-path="url(#axc)" fill="none" stroke-width="0.85" stroke-linejoin="round">
<polyline stroke="#0000ff" points="56.90,322.10 61.31,322.10 65.72,322.10 70.12,322.10 74.53,322.10 78.94,322.10 83.35,322.10 87.75,322.10 92.16,322.10 96.57,322.10 100.98,322.10 105.38,322.10 109.79,322.10 114.20,322.10 118.61,322.10 123.01,322.10 127.42,322.10 131.83,322.10 136.24,322.10 140.64,322.10 145.05,322.10 149.46,322.10 153.87,322.10 158.27,322.10 162.68,322.10 167.09,322.10 171.50,322.10 175.90,322.10 180.31,322.10 184.72,322.10 189.13,322.10 193.53,322.10 197.94,322.10 202.35,322.10 206.76,322.10 211.16,322.10 215.57,322.10 219.98,322.10 224.39,322.10 228.79,322.10 233.20,322.10 237.61,322.10 242.02,322.10 246.42,322.10 250.83,322.10 255.24,322.10 259.65,322.10 264.05,322.10 268.46,322.10 272.87,322.10 277.28,322.10 281.68,322.09 286.09,322.09 290.50,322.08 294.91,322.08 299.31,322.07 303.72,322.05 308.13,322.03 312.54,321.99 316.94,321.94 321.35,321.87 325.76,321.75 330.17,321.59 334.57,321.35 338.98,321.00 343.39,320.48 347.80,319.71 352.20,318.58 356.61,316.92 361.02,314.47 365.42,310.87 369.83,305.56 374.24,297.75 378.65,286.25 383.05,269.32 387.46,244.39 391.87,207.69 396.28,153.65 400.68,74.09"/>
<polyline stroke="#008000" points="56.90,322.10 61.31,322.10 65.72,322.10 70.12,322.10 74.53,322.10 78.94,322.10 83.35,322.10 87.75,322.10 92.16,322.10 96.57,322.10 100.98,322.10 105.38,322.10 109.79,322.10 114.20,322.10 118.61,322.10 123.01,322.10 127.42,322.10 131.83,322.10 136.24,322.10 140.64,322.10 145.05,322.10 149.46,322.10 153.87,322.10 158.27,322.10 162.68,322.10 167.09,322.10 171.50,322.10 175.90,322.10 180.31,322.10 184.72,322.10 189.13,322.10 193.53,322.10 197.94,322.10 202.35,322.10 206.76,322.10 211.16,322.10 215.57,322.10 219.98,322.10 224.39,322.10 228.79,322.10 233.20,322.10 237.61,322.10 242.02,322.10 246.42,322.10 250.83,322.10 255.24,322.10 259.65,322.10 264.05,322.10 268.46,322.10 272.87,322.10 277.28,322.10 281.68,322.10 286.09,322.10 290.50,322.10 294.91,322.10 299.31,322.10 303.72,322.10 308.13,322.10 312.54,322.10 316.94,322.10 321.35,322.10 325.76,322.10 330.17,322.10 334.57,322.10 338.98,322.10 343.39,322.10 347.80,322.10 352.20,322.10 356.61,322.10 361.02,322.10 365.42,322.10 369.83,322.10 374.24,302.47 378.65,270.66 383.05,238.84 387.46,207.03 391.87,175.22 396.28,143.41 400.68,111.60"/>
</g>
<path d="M56.90,322.10v-3.4M56.90,49.10v3.4M100.97,322.10v-3.4M100.97,49.10v3.4M145.05,322.10v-3.4M145.05,49.10v3.4M189.12,322.10v-3.4M189.12,49.10v3.4M233.20,322.10v-3.4M233.20,49.10v3.4M277.27,322.10v-3.4M277.27,49.10v3.4M321.35,322.10v-3.4M321.35,49.10v3.4M365.43,322.10v-3.4M365.43,49.10v3.4M409.50,322.10v-3.4M409.50,49.10v3.4M56.90,322.10h3.4M409.50,322.10h-3.4M56.90,283.10h3.4M409.50,283.10h-3.4M56.90,244.10h3.4M409.50,244.10h-3.4M56.90,205.10h3.4M409.50,205.10h-3.4M56.90,166.10h3.4M409.50,166.10h-3.4M56.90,127.10h3.4M409.50,127.10h-3.4M56.90,88.10h3.4M409.50,88.10h-3.4M56.90,49.10h3.4M409.50,49.10h-3.4" stroke="#222" stroke-width="0.65" fill="none"/>
<rect x="56.90" y="49.10" width="352.60" height="273.00" fill="none" stroke="#1a1a1a" stroke-width="1"/>
<text x="57.10" y="332.80" font-size="10" text-anchor="middle" fill="#111" stroke="#111" stroke-width="0.25">0.0</text>
<text x="101.17" y="332.80" font-size="10" text-anchor="middle" fill="#111" stroke="#111" stroke-width="0.25">0.1</text>
<text x="145.25" y="332.80" font-size="10" text-anchor="middle" fill="#111" stroke="#111" stroke-width="0.25">0.2</text>
<text x="189.32" y="332.80" font-size="10" text-anchor="middle" fill="#111" stroke="#111" stroke-width="0.25">0.3</text>
<text x="233.40" y="332.80" font-size="10" text-anchor="middle" fill="#111" stroke="#111" stroke-width="0.25">0.4</text>
<text x="277.47" y="332.80" font-size="10" text-anchor="middle" fill="#111" stroke="#111" stroke-width="0.25">0.5</text>
<text x="321.55" y="332.80" font-size="10" text-anchor="middle" fill="#111" stroke="#111" stroke-width="0.25">0.6</text>
<text x="365.62" y="332.80" font-size="10" text-anchor="middle" fill="#111" stroke="#111" stroke-width="0.25">0.7</text>
<text x="409.70" y="332.80" font-size="10" text-anchor="middle" fill="#111" stroke="#111" stroke-width="0.25">0.8</text>
<text x="54.30" y="324.80" font-size="10" text-anchor="end" fill="#111" stroke="#111" stroke-width="0.25">0</text>
<text x="54.30" y="285.80" font-size="10" text-anchor="end" fill="#111" stroke="#111" stroke-width="0.25">2</text>
<text x="54.30" y="246.80" font-size="10" text-anchor="end" fill="#111" stroke="#111" stroke-width="0.25">4</text>
<text x="54.30" y="207.80" font-size="10" text-anchor="end" fill="#111" stroke="#111" stroke-width="0.25">6</text>
<text x="54.30" y="168.80" font-size="10" text-anchor="end" fill="#111" stroke="#111" stroke-width="0.25">8</text>
<text x="54.30" y="129.80" font-size="10" text-anchor="end" fill="#111" stroke="#111" stroke-width="0.25">10</text>
<text x="54.30" y="90.80" font-size="10" text-anchor="end" fill="#111" stroke="#111" stroke-width="0.25">12</text>
<text x="54.30" y="51.80" font-size="10" text-anchor="end" fill="#111" stroke="#111" stroke-width="0.25">14</text>
<text x="233.20" y="347.20" font-size="10.5" text-anchor="middle" fill="#2a2a2a" letter-spacing="-0.9" style="font-family:'Liberation Serif',serif"><tspan font-style="italic">v</tspan>[<tspan font-style="italic">V</tspan>]</text>
<text transform="translate(37.10,185.80) rotate(-90)" font-size="10.5" text-anchor="middle" fill="#2a2a2a" letter-spacing="-0.7" style="font-family:'Liberation Serif',serif"><tspan font-style="italic" letter-spacing="0.3">i</tspan>[<tspan font-style="italic">A</tspan>]</text>
<rect x="8.20" y="361.20" width="1.7" height="3.4" fill="#c8726c"/>
<rect x="7.50" y="367.20" width="10.6" height="9.4" fill="#e6e6ec" stroke="#9d9dab" stroke-width="0.6"/>
<path d="M4.90,369.30l7.9,-7.4l7.9,7.4" fill="none" stroke="#b8273a" stroke-width="2.3" stroke-linejoin="miter"/>
<rect x="10.60" y="368.20" width="4.4" height="8" rx="0.8" fill="#fbb12f" stroke="#d8452a" stroke-width="0.7"/>
<rect x="12.40" y="368.80" width="1.6" height="6.6" fill="#ffd95e"/>
<circle cx="37.00" cy="369.10" r="7.5" fill="#1b7aa0" stroke="#16678a" stroke-width="0.5"/>
<circle cx="37.00" cy="367.90" r="5.4" fill="#2589b4" opacity=".7"/>
<path d="M32.80,369.30l4.00,-3.7v2.1h3.60v3.2h-3.60v2.1z" fill="#d3e6f2"/>
<path d="M32.80,369.30l4.00,-3.7v2.1z" fill="#7fe0b4" opacity=".8"/>
<circle cx="61.00" cy="369.10" r="7.5" fill="#1b7aa0" stroke="#16678a" stroke-width="0.5"/>
<circle cx="61.00" cy="367.90" r="5.4" fill="#2589b4" opacity=".7"/>
<path d="M65.20,369.30l-4.00,-3.7v2.1h-3.60v3.2h3.60v2.1z" fill="#d3e6f2"/>
<path d="M65.20,369.30l-4.00,-3.7v2.1z" fill="#7fe0b4" opacity=".8"/>
<path d="M85.20,362.90v12.4M79.00,369.10h12.4" stroke="#1c5c78" stroke-width="1.6"/>
<path d="M85.20,360.80l2.6,3.2h-5.2zM85.20,377.40l2.6,-3.2h-5.2zM76.90,369.10l3.2,-2.6v5.2zM93.50,369.10l-3.2,-2.6v5.2z" fill="#1c5c78"/>
<rect x="106.90" y="365.90" width="9.5" height="8.5" fill="#fbfbfb" stroke="#a9c7dc" stroke-width="0.7"/>
<circle cx="106.70" cy="369.90" r="5.3" fill="#9ec7e2" opacity=".85" stroke="#7fb2d4" stroke-width="0.6"/><circle cx="106.70" cy="369.90" r="2.4" fill="#6fa6cf" opacity=".8"/>
<path d="M110.70,365.70l5.8,-4.2" stroke="#f0a030" stroke-width="2.2" stroke-linecap="round"/>
<rect x="126.70" y="360.50" width="13.8" height="15.6" fill="#e9e9e9" stroke="#9c9c9c" stroke-width="0.7"/>
<rect x="128.50" y="363.20" width="10.2" height="10.2" fill="#fdfdfd" stroke="#3f60cf" stroke-width="1.7"/>
<path d="M130.20,369.60l2.2,-2.6l2.2,2.4l2.4,-2.6" fill="none" stroke="#222" stroke-width="0.8"/>
<path d="M133.60,360.50l2.6,2.9h-5.2zM133.60,376.30l2.6,-2.9h-5.2zM125.60,368.30l2.9,-2.6v5.2zM141.60,368.30l-2.9,-2.6v5.2z" fill="#58d24c"/>
<rect x="151.50" y="361.90" width="12.8" height="12.8" rx="1.3" fill="#1f5a7d"/>
<rect x="153.60" y="362.70" width="8.6" height="4.4" fill="#6f93ad"/><rect x="153.60" y="362.70" width="8.6" height="0.9" fill="#c9785a"/><rect x="155.30" y="370.70" width="6.2" height="3.8" fill="#b7c6d2"/><rect x="156.30" y="371.20" width="1.7" height="2.8" fill="#1f4a66"/>
</svg>
</div>
</body></html>
